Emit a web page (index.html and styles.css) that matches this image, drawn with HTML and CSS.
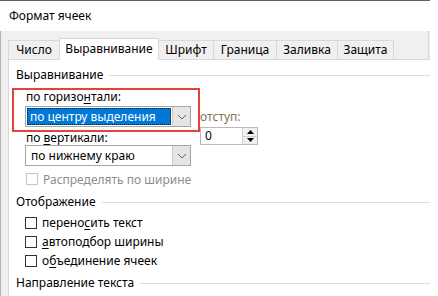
FILE: index.html
```html
<!DOCTYPE html>
<html lang="ru">
<head>
<meta charset="utf-8">
<link rel="stylesheet" href="styles.css">
</head>
<body>
<div class="dialog">
  <div class="titlebar">Формат ячеек</div>
  <div class="frame">
    <div class="tabs">
      <div class="tab w1">Число</div>
      <div class="tab active w2">Выравнивание</div>
      <div class="tab w3">Шрифт</div>
      <div class="tab w4">Граница</div>
      <div class="tab w5">Заливка</div>
      <div class="tab w6">Защита</div>
    </div>
    <div class="panel">
      <div class="section first"><span>Выравнивание</span><i class="rule"></i></div>
      <div class="align">
        <div class="col-left">
          <div class="lbl l1">по горизо<u>н</u>тали:</div>
          <div class="combo c1">
            <div class="combo-val"><span class="sel">по центру выделения</span></div>
            <div class="combo-btn"><svg width="10" height="6" viewBox="0 0 10 6"><path d="M1 1 L5 5 L9 1" fill="none" stroke="#606060" stroke-width="1"/></svg></div>
          </div>
          <div class="lbl l2">по <u>в</u>ертикали:</div>
          <div class="combo">
            <div class="combo-val"><span class="plain">по нижнему краю</span></div>
            <div class="combo-btn"><svg width="10" height="6" viewBox="0 0 10 6"><path d="M1 1 L5 5 L9 1" fill="none" stroke="#606060" stroke-width="1"/></svg></div>
          </div>
          <div class="check disabled dist"><span class="box"></span><span>Распределять по ширине</span></div>
        </div>
        <div class="col-right">
          <div class="lbl indent-lbl">отступ:</div>
          <div class="spin">
            <div class="spin-val">0</div>
            <div class="spin-btns">
              <div class="sb"><svg width="7" height="4" viewBox="0 0 7 4"><path d="M0 4 L3.5 0 L7 4 Z" fill="#000"/></svg></div>
              <div class="sb"><svg width="7" height="4" viewBox="0 0 7 4"><path d="M0 0 L3.5 4 L7 0 Z" fill="#000"/></svg></div>
            </div>
          </div>
        </div>
        <div class="highlight"></div>
      </div>
      <div class="section s2"><span>Отображение</span><i class="rule"></i></div>
      <div class="checks">
        <div class="check row"><span class="box"></span><span>перено<u>с</u>ить текст</span></div>
        <div class="check row"><span class="box"></span><span><u>а</u>втоподбор ширины</span></div>
        <div class="check row"><span class="box"></span><span>о<u>б</u>ъединение ячеек</span></div>
      </div>
      <div class="section s3"><span>Направление текста</span><i class="rule"></i></div>
    </div>
  </div>
</div>
</body>
</html>
```
FILE: styles.css
```css
* { box-sizing: border-box; }
html, body { margin: 0; padding: 0; }
body {
  width: 438px;
  height: 296px;
  overflow: hidden;
  background: #ffffff;
  font-family: "Noto Sans", "Segoe UI", "Liberation Sans", sans-serif;
  font-size: 12px;
  color: #000;
}
u { text-decoration-thickness: 1px; text-underline-offset: 2px; }
.dialog {
  width: 430px;
  border-top: 1px solid #5f5f5f;
}
.titlebar {
  height: 30px;
  line-height: 30px;
  padding-left: 9px;
  background: #fff;
}
.frame {
  background: #f0f0f0;
  border-left: 1px solid #b4b4b4;
  padding-left: 7px;
  height: 270px;
}
.tabs {
  height: 28px;
  display: flex;
  align-items: flex-end;
  border-right: 1px dotted #c4c4c4;
  margin-right: 1px;
}
.tab {
  height: 19px;
  line-height: 17px;
  text-align: center;
  border: 1px solid #d9d9d9;
  border-bottom: none;
  border-left: none;
  background: #f0f0f0;
  white-space: nowrap;
}
.tab.w1 { width: 52px; border-left: 1px solid #d9d9d9; }
.tab.w2 { width: 100px; }
.tab.w3 { width: 55px; }
.tab.w4 { width: 63px; }
.tab.w5 { width: 61px; }
.tab.w6 { width: 56px; }
.tab.active {
  height: 22px;
  line-height: 19px;
  background: #fff;
  border-left: 1px solid #d9d9d9;
  margin-left: -1px;
  margin-bottom: -1px;
  position: relative;
  z-index: 1;
}
.panel {
  background: #fff;
  border-top: 1px solid #d9d9d9;
  border-left: 1px solid #d9d9d9;
  padding-left: 7px;
  height: 242px;
}
.section {
  display: flex;
  align-items: center;
  height: 14px;
  line-height: 14px;
  white-space: nowrap;
}
.section.first { margin-top: 8px; }
.section.s2 { margin-top: 9px; }
.section.s3 { margin-top: 6px; }
.rule {
  flex: 1;
  height: 1px;
  background: #dcdcdc;
  margin-left: 6px;
}
.align {
  position: relative;
  display: flex;
  padding-left: 9px;
}
.col-left { width: 166px; flex: none; }
.lbl { height: 14px; line-height: 14px; padding-left: 1px; white-space: nowrap; }
.l1 { margin-top: 8px; }
.l2 { margin-top: 4px; }
.combo {
  display: flex;
  height: 21px;
  border: 1px solid #a6a6a6;
  background: #fff;
}
.combo.c1 { margin-top: 2px; }
.combo-val {
  flex: 1;
  padding: 1px;
  display: flex;
  white-space: nowrap;
}
.sel {
  flex: 1;
  background: #0078d7;
  color: #fff;
  outline: 1px dotted #1a1a1a;
  outline-offset: -1px;
  padding-left: 3px;
  line-height: 17px;
}
.plain { padding-left: 4px; line-height: 17px; }
.combo-btn {
  width: 18px;
  background: #e5e5e5;
  border-left: 1px solid #c8c8c8;
  display: flex;
  align-items: center;
  justify-content: center;
}
.check {
  display: flex;
  align-items: center;
  gap: 5px;
  padding-left: 1px;
  white-space: nowrap;
}
.check .box {
  flex: none;
  width: 12px;
  height: 12px;
  border: 1px solid #333;
  background: #fff;
}
.check.disabled { color: #8d8d8d; }
.check.disabled .box { border-color: #c4c4c4; }
.dist { margin-top: 6px; height: 14px; width: 200px; }
.checks { margin-top: 4px; padding-left: 9px; }
.check.row { height: 19px; padding-left: 0; }
.col-right { margin-left: 9px; }
.indent-lbl { margin-top: 28px; color: #7e7358; padding-left: 0; }
.spin {
  margin-top: 3px;
  width: 58px;
  height: 18px;
  border: 1px solid #b9b9b9;
  display: flex;
  background: #fff;
}
.spin-val { flex: 1; padding-left: 4px; line-height: 16px; }
.spin-btns {
  width: 15px;
  display: flex;
  flex-direction: column;
  border-left: 1px solid #d0d0d0;
}
.sb {
  flex: 1;
  display: flex;
  align-items: center;
  justify-content: center;
  background: #f0f0f0;
}
.sb + .sb { border-top: 1px solid #d0d0d0; }
.highlight {
  position: absolute;
  left: -4px;
  top: 6px;
  width: 188px;
  height: 44px;
  border: 2px solid #e8403c;
}
```
